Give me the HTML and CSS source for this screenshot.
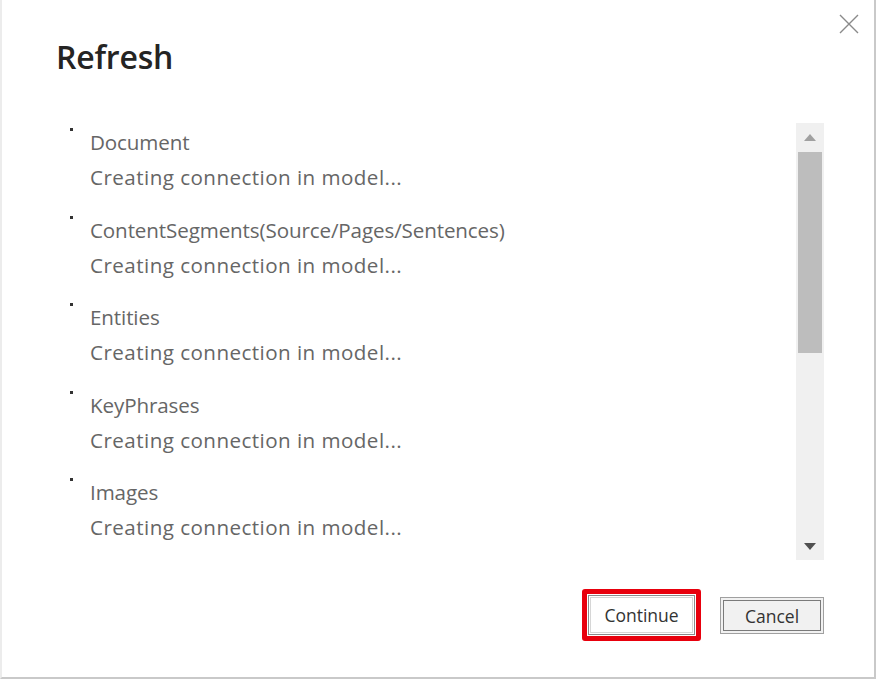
FILE: index.html
```html
<!DOCTYPE html>
<html>
<head>
<meta charset="utf-8">
<link rel="stylesheet" href="styles.css">
</head>
<body>
<div class="dialog">
  <button class="close" aria-label="Close">
    <svg width="20" height="20" viewBox="0 0 20 20"><path d="M1 1 L19 19 M19 1 L1 19" stroke="#8a8a8a" stroke-width="1.4" fill="none"/></svg>
  </button>
  <h1 class="title">Refresh</h1>
  <div class="content">
    <ul class="list">
      <li class="item"><span class="bullet"></span><div class="text"><div class="name">Document</div><div class="status">Creating connection in model...</div></div></li>
      <li class="item"><span class="bullet"></span><div class="text"><div class="name">ContentSegments(Source/Pages/Sentences)</div><div class="status">Creating connection in model...</div></div></li>
      <li class="item"><span class="bullet"></span><div class="text"><div class="name">Entities</div><div class="status">Creating connection in model...</div></div></li>
      <li class="item"><span class="bullet"></span><div class="text"><div class="name">KeyPhrases</div><div class="status">Creating connection in model...</div></div></li>
      <li class="item"><span class="bullet"></span><div class="text"><div class="name">Images</div><div class="status">Creating connection in model...</div></div></li>
    </ul>
    <div class="scrollbar">
      <div class="arrow up"></div>
      <div class="track"><div class="thumb"></div></div>
      <div class="arrow down"></div>
    </div>
  </div>
  <div class="footer">
    <div class="highlight"><button class="btn primary">Continue</button></div>
    <button class="btn cancel">Cancel</button>
  </div>
</div>
</body>
</html>
```
FILE: styles.css
```css
html, body {
  margin: 0;
  padding: 0;
  background: #fff;
}
.dialog {
  position: relative;
  box-sizing: border-box;
  width: 876px;
  height: 679px;
  border-left: 2px solid #ececec;
  border-right: 2px solid #c9c9c9;
  border-bottom: 2px solid #c9c9c9;
  padding: 0 50px 0 54px;
  font-family: "Open Sans", "Noto Sans", sans-serif;
  display: flex;
  flex-direction: column;
}
.close {
  position: absolute;
  top: 14px;
  right: 15px;
  width: 20px;
  height: 20px;
  padding: 0;
  border: 0;
  background: none;
}
.close svg { display: block; }
.title {
  margin: 0;
  padding-top: 34px;
  height: 123px;
  box-sizing: border-box;
  font-size: 32px;
  line-height: 46px;
  font-weight: 600;
  color: #252423;
  letter-spacing: -0.2px;
}
.content {
  display: flex;
  height: 437px;
}
.list {
  flex: 1;
  list-style: none;
  margin: 0;
  padding: 2px 0 0 14px;
  overflow: hidden;
}
.item {
  display: flex;
  align-items: flex-start;
  padding-bottom: 17.5px;
}
.bullet {
  width: 3px;
  height: 3px;
  background: #333;
  margin-top: 3px;
  margin-right: 17px;
  flex: none;
}
.name, .status {
  font-size: 20.6px;
  line-height: 35px;
  color: #666;
}
.name {
  letter-spacing: -0.12px;
}
.status {
  letter-spacing: 0.45px;
}
.scrollbar {
  width: 28px;
  background: #f0f0f0;
  display: flex;
  flex-direction: column;
  align-items: center;
}
.arrow {
  height: 29px;
  width: 28px;
  position: relative;
  flex: none;
}
.arrow.up::after, .arrow.down::after {
  content: "";
  position: absolute;
  left: 8px;
  width: 0;
  height: 0;
  border-left: 6px solid transparent;
  border-right: 6px solid transparent;
}
.arrow.up::after {
  top: 11px;
  border-bottom: 7px solid #a0a0a0;
}
.arrow.down::after {
  bottom: 10px;
  border-top: 7px solid #505050;
}
.track {
  flex: 1;
  width: 24px;
}
.thumb {
  height: 201px;
  background: #bdbdbd;
}
.footer {
  display: flex;
  justify-content: flex-end;
  align-items: flex-start;
  padding-top: 29px;
}
.highlight {
  border: 5px solid #e8000d;
  border-radius: 3px;
  padding: 1px;
  margin-right: 19px;
}
.btn {
  font-family: "Open Sans", "Noto Sans", sans-serif;
  font-size: 17.5px;
  color: #333;
  box-sizing: border-box;
  padding: 0;
}
.primary {
  width: 107px;
  height: 40px;
  background: #fff;
  border: 1px solid #8a8a8a;
  box-shadow: inset 0 0 0 1px #fff, inset 0 0 0 2px #d6d6d6;
}
.cancel {
  width: 104px;
  height: 37px;
  margin-top: 8px;
  background: #f1f1f1;
  border: 1px solid #a0a0a0;
  box-shadow: inset 0 0 0 2px #f1f1f1, inset 0 0 0 3px #7a7a7a;
}
```
